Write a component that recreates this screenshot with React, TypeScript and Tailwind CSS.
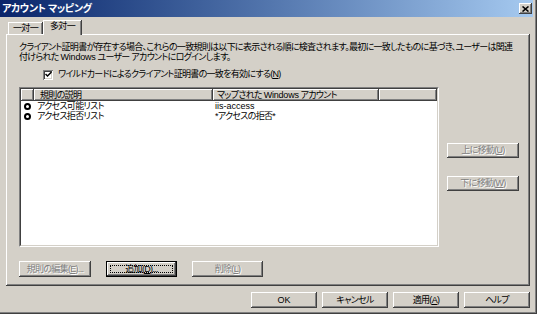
import React from 'react';

const raised =
  'bg-[#d4d0c8] shadow-[inset_-1px_-1px_0_#404040,inset_1px_1px_0_#fff,inset_-2px_-2px_0_#808080]';

function Btn({
  children,
  disabled,
  className,
}: {
  children: React.ReactNode;
  disabled?: boolean;
  className?: string;
}) {
  return (
    <div
      className={`${raised} flex items-center justify-center whitespace-nowrap text-[9px] leading-none ${
        disabled ? 'text-[#808080] [text-shadow:1px_1px_0_#fff]' : 'text-black'
      } ${className ?? ''}`}
    >
      <span>{children}</span>
    </div>
  );
}

function DefaultBtn({ children, className }: { children: React.ReactNode; className?: string }) {
  return (
    <div className={`border border-black ${className ?? ''}`}>
      <div className={`${raised} h-full p-[3px] flex`}>
        <div className="flex-1 border border-dotted border-black flex items-center justify-center text-[9px] leading-none whitespace-nowrap">
          <span>{children}</span>
        </div>
      </div>
    </div>
  );
}

const rules = [
  { name: 'アクセス可能リスト', account: 'iis-access', latin: true },
  { name: 'アクセス拒否リスト', account: '*アクセスの拒否*', latin: false },
];

export default function App() {
  return (
    <div className="w-[537px] h-[314px] border-r border-b border-[#404040] text-black tracking-[-0.7px] font-['Liberation_Sans','Noto_Sans_CJK_JP',sans-serif] [font-feature-settings:'palt']">
      <div className="h-full flex flex-col bg-[#d4d0c8] border-r border-b border-[#808080] pr-[2px]">
        {/* title bar */}
        <div className="h-[17px] flex items-center bg-gradient-to-r from-[#0a246a] to-[#a6caf0] pl-[2px] pr-[1px]">
          <span className="text-white font-bold text-[10px] tracking-[-0.4px] leading-none whitespace-nowrap">
            アカウント マッピング
          </span>
          <div className={`${raised} ml-auto w-[13px] h-[11px] flex items-center justify-center`}>
            <svg width="7" height="6" viewBox="0 0 7 6">
              <path d="M0.5 0.5 L6.5 5.5 M6.5 0.5 L0.5 5.5" stroke="#000" strokeWidth="1.6" />
            </svg>
          </div>
        </div>

        <div className="flex flex-col pl-[6px] pr-[3px]">
          {/* tabs */}
          <div className="h-[17px] flex items-end pl-[2px]">
            <div className="w-[35px] h-[12px] flex items-center justify-center text-[9px] leading-none bg-[#d4d0c8] shadow-[inset_-1px_0_0_#404040,inset_1px_1px_0_#fff,inset_-2px_0_0_#808080]">
              一対一
            </div>
            <div className="relative z-10 -mb-[1px] w-[39px] h-[15px] pb-[2px] flex items-center justify-center text-[9px] leading-none bg-[#d4d0c8] shadow-[inset_-1px_0_0_#404040,inset_1px_1px_0_#fff,inset_-2px_0_0_#808080]">
              多対一
            </div>
          </div>

          {/* tab panel */}
          <div className="h-[252px] flex flex-col pt-[8px] pl-[13px] pr-[11px] bg-[#d4d0c8] shadow-[inset_-1px_-1px_0_#404040,inset_1px_1px_0_#fff,inset_-2px_-2px_0_#808080]">
            <div className="text-[9px] leading-[10px] whitespace-nowrap">
              <div>
                クライアント証明書が存在する場合、これらの一致規則は以下に表示される順に検査されます。最初に一致したものに基づき、ユーザーは関連
              </div>
              <div>
                付けられた <span className="tracking-[-0.2px]">Windows</span> ユーザー アカウントにログインします。
              </div>
            </div>

            <div className="mt-[7px] h-[11px] flex items-center pl-[24px] gap-[5px]">
              <div className="w-[10px] h-[10px] bg-white flex items-center justify-center shadow-[inset_1px_1px_0_#808080,inset_-1px_-1px_0_#fff,inset_2px_2px_0_#404040,inset_-2px_-2px_0_#d4d0c8]">
                <svg width="7" height="7" viewBox="0 0 7 7">
                  <path d="M0.5 3 L2.5 5 L6.5 1" fill="none" stroke="#000" strokeWidth="1.5" />
                </svg>
              </div>
              <span className="text-[9px] leading-none whitespace-nowrap">
                ワイルドカードによるクライアント証明書の一致を有効にする(<u>N</u>)
              </span>
            </div>

            <div className="mt-[7px] flex">
              {/* list view */}
              <div className="w-[420px] h-[160px] border border-t-[#808080] border-l-[#808080] border-r-white border-b-white">
                <div className="h-full bg-white border border-t-[#404040] border-l-[#404040] border-r-[#d4d0c8] border-b-[#d4d0c8] flex flex-col">
                  <div className="h-[12px] flex text-[9px] leading-none">
                    <div className={`${raised} w-[13px]`} />
                    <div className={`${raised} w-[179px] flex items-center pl-[6px] whitespace-nowrap`}>規則の説明</div>
                    <div className={`${raised} w-[166px] flex items-center pl-[4px] whitespace-nowrap`}>
                      <span>
                        マップされた <span className="tracking-[-0.2px]">Windows</span> アカウント
                      </span>
                    </div>
                    <div className={`${raised} flex-1`} />
                  </div>
                  {rules.map(r => (
                    <div key={r.name} className="h-[10px] flex items-center text-[9px] leading-none whitespace-nowrap">
                      <div className="w-[13px] flex justify-center">
                        <div className="w-[7px] h-[7px] rounded-full border-2 border-black" />
                      </div>
                      <div className="w-[179px] pl-[3px]">{r.name}</div>
                      <div className={`pl-[2px] ${r.latin ? 'tracking-normal' : ''}`}>{r.account}</div>
                    </div>
                  ))}
                </div>
              </div>

              <div className="ml-[8px] w-[72px] flex flex-col pt-[56px] gap-[18px]">
                <Btn disabled className="h-[15px]">
                  上に移動(<u>U</u>)
                </Btn>
                <Btn disabled className="h-[15px]">
                  下に移動(<u>W</u>)
                </Btn>
              </div>
            </div>

            <div className="mt-[14px] flex gap-[15px]">
              <Btn disabled className="w-[72px] h-[16px]">
                規則の編集(<u>E</u>)...
              </Btn>
              <DefaultBtn className="w-[71px] h-[16px]">
                追加(<u>D</u>)...
              </DefaultBtn>
              <Btn disabled className="w-[71px] h-[16px]">
                削除(<u>L</u>)
              </Btn>
            </div>
          </div>

          {/* dialog buttons */}
          <div className="mt-[6px] flex justify-end gap-[5px]">
            <Btn className="w-[66px] h-[16px] tracking-normal">OK</Btn>
            <Btn className="w-[66px] h-[16px]">キャンセル</Btn>
            <Btn className="w-[66px] h-[16px]">
              適用(<u>A</u>)
            </Btn>
            <Btn className="w-[66px] h-[16px]">ヘルプ</Btn>
          </div>
        </div>
      </div>
    </div>
  );
}
